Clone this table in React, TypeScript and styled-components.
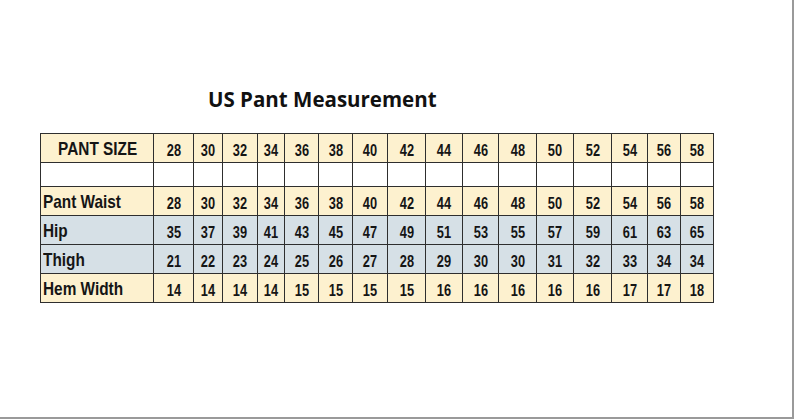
import React from 'react';
import styled, { createGlobalStyle } from 'styled-components';

const GlobalStyle = createGlobalStyle`
  html, body {
    margin: 0;
    padding: 0;
    background: #ffffff;
  }
`;

const sizes = [28, 30, 32, 34, 36, 38, 40, 42, 44, 46, 48, 50, 52, 54, 56, 58];
const colWidths = [113, 40, 29, 35, 27, 34, 34, 35, 38, 37, 36, 38, 37, 38, 36, 33, 33];

type Row = { label: string; values: number[]; tone: 'cream' | 'blue' };

const rows: Row[] = [
  { label: 'Pant Waist', values: sizes, tone: 'cream' },
  { label: 'Hip', values: [35, 37, 39, 41, 43, 45, 47, 49, 51, 53, 55, 57, 59, 61, 63, 65], tone: 'blue' },
  { label: 'Thigh', values: [21, 22, 23, 24, 25, 26, 27, 28, 29, 30, 30, 31, 32, 33, 34, 34], tone: 'blue' },
  { label: 'Hem Width', values: [14, 14, 14, 14, 15, 15, 15, 15, 16, 16, 16, 16, 16, 17, 17, 18], tone: 'cream' },
];

const tones = {
  cream: '#fdf1cf',
  blue: '#d6e0e6',
  white: '#ffffff',
};

const Page = styled.div`
  width: 792px;
  height: 417px;
  border-right: 2px solid #9a9a9a;
  border-bottom: 2px solid #9a9a9a;
  background: #fff;
  overflow: hidden;
`;

const Title = styled.h1`
  margin: 0;
  padding: 86px 0 0 208px;
  font-family: 'Open Sans', 'Liberation Sans', sans-serif;
  font-weight: 700;
  font-size: 20.5px;
  line-height: 26px;
  color: #111;
`;

const Table = styled.table`
  margin: 21px 0 0 40px;
  border-collapse: collapse;
  table-layout: fixed;
  font-family: 'Liberation Sans', Arial, sans-serif;
  font-weight: 700;
  color: #151515;
`;

const Tr = styled.tr<{ $tone: keyof typeof tones; $h: number }>`
  background: ${(p) => tones[p.$tone]};
  height: ${(p) => p.$h}px;
`;

const Label = styled.td<{ $center?: boolean }>`
  border: 1px solid #2e2e2e;
  padding: 1px 0 0 2px;
  font-size: 18.5px;
  text-align: ${(p) => (p.$center ? 'center' : 'left')};
  white-space: nowrap;
  overflow: hidden;
`;

const Cell = styled.td`
  border: 1px solid #2e2e2e;
  padding: 5px 0 0;
  font-size: 16px;
  text-align: center;
  white-space: nowrap;
  overflow: hidden;
`;

/* no narrow face is installed, so squeeze the regular one */
const Narrow = styled.span<{ $origin?: string; $scale?: number }>`
  display: inline-block;
  transform: scaleX(${(p) => p.$scale ?? 0.8});
  transform-origin: ${(p) => p.$origin || 'center'};
`;

export default function App() {
  return (
    <Page>
      <GlobalStyle />
      <Title>US Pant Measurement</Title>
      <Table>
        <colgroup>
          {colWidths.map((w, i) => (
            <col key={i} style={{ width: w }} />
          ))}
        </colgroup>
        <tbody>
          <Tr $tone="cream" $h={29}>
            <Label $center>
              <Narrow $scale={0.83}>PANT SIZE</Narrow>
            </Label>
            {sizes.map((s) => (
              <Cell key={s}>
                <Narrow>{s}</Narrow>
              </Cell>
            ))}
          </Tr>
          <Tr $tone="white" $h={24}>
            <Label />
            {sizes.map((s) => (
              <Cell key={s} />
            ))}
          </Tr>
          {rows.map((r) => (
            <Tr key={r.label} $tone={r.tone} $h={29}>
              <Label>
                <Narrow $origin="left" $scale={0.83}>
                  {r.label}
                </Narrow>
              </Label>
              {r.values.map((v, i) => (
                <Cell key={i}>
                  <Narrow>{v}</Narrow>
                </Cell>
              ))}
            </Tr>
          ))}
        </tbody>
      </Table>
    </Page>
  );
}
